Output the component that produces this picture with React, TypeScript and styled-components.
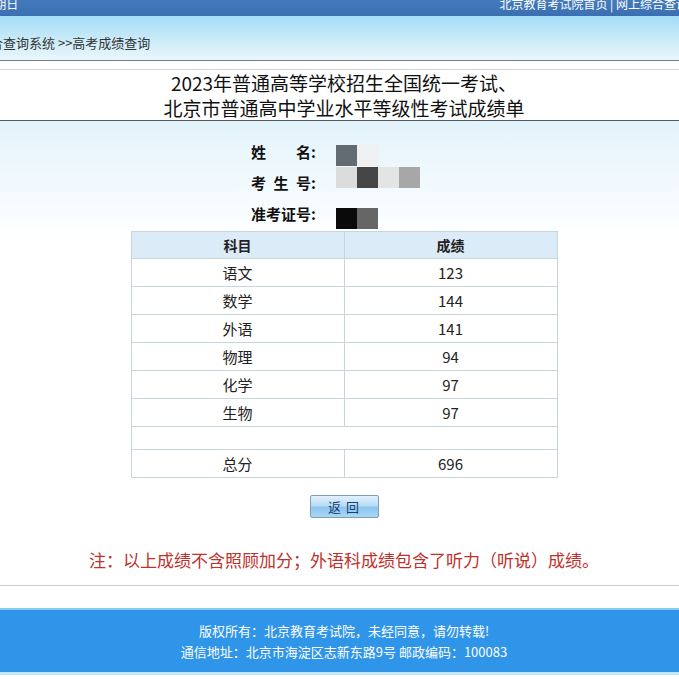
import React from 'react';
import styled, { createGlobalStyle } from 'styled-components';

const GlobalStyle = createGlobalStyle`
  html, body {
    margin: 0;
    padding: 0;
    background: #ffffff;
    overflow: hidden;
  }
  body {
    font-family: "Noto Sans CJK SC", "Noto Sans", sans-serif;
  }
`;

const scores = [
  { subject: '语文', score: '123' },
  { subject: '数学', score: '144' },
  { subject: '外语', score: '141' },
  { subject: '物理', score: '94' },
  { subject: '化学', score: '97' },
  { subject: '生物', score: '97' },
];

// blurred personal data, shown as mosaic tiles
const infoRows = [
  { label: '姓\u3000\u3000名:', pad: 9, blocks: ['#626a72', '#eef0f2'] },
  { label: '考\u2002生\u2002号:', pad: 0, blocks: ['#dcdcdd', '#454545', '#e3e4e4', '#a7a7a7'] },
  { label: '准考证号:', pad: 10, blocks: ['#0a0a0a', '#666666'] },
];

const App = () => {
  return (
    <>
      <GlobalStyle />
      <Page>
        <TopBar>
          <span>2023年6月25日 星期日</span>
          <TopLinks>北京教育考试院首页 | 网上综合查询系统</TopLinks>
        </TopBar>
        <Breadcrumb>当前位置：网上综合查询系统 &gt;&gt;高考成绩查询</Breadcrumb>
        <Spacer />
        <TitleBox>
          <div>2023年普通高等学校招生全国统一考试、</div>
          <div>北京市普通高中学业水平等级性考试成绩单</div>
        </TitleBox>
        <Content>
          <InfoGrid>
            {infoRows.map((row) => (
              <React.Fragment key={row.label}>
                <InfoLabel>{row.label}</InfoLabel>
                <InfoValue $pad={row.pad}>
                  {row.blocks.map((c, i) => (
                    <Mosaic key={i} $color={c} />
                  ))}
                </InfoValue>
              </React.Fragment>
            ))}
          </InfoGrid>
          <ScoreTable>
            <thead>
              <tr>
                <HeadCell>科目</HeadCell>
                <HeadCell>成绩</HeadCell>
              </tr>
            </thead>
            <tbody>
              {scores.map((s) => (
                <tr key={s.subject}>
                  <Cell>{s.subject}</Cell>
                  <Cell>{s.score}</Cell>
                </tr>
              ))}
              <tr>
                <BlankCell colSpan={2} />
              </tr>
              <tr>
                <Cell>总分</Cell>
                <Cell>696</Cell>
              </tr>
            </tbody>
          </ScoreTable>
          <ButtonRow>
            <BackButton>返 回</BackButton>
          </ButtonRow>
          <Note>注：以上成绩不含照顾加分；外语科成绩包含了听力（听说）成绩。</Note>
        </Content>
        <Footer>
          <div>版权所有：北京教育考试院，未经同意，请勿转载!</div>
          <div>通信地址：北京市海淀区志新东路9号 邮政编码：100083</div>
        </Footer>
      </Page>
    </>
  );
};

const Page = styled.div`
  width: 960px;
  margin-left: -136px;
  margin-top: -8px;
  display: flex;
  flex-direction: column;
`;

const TopBar = styled.div`
  height: 24px;
  display: flex;
  align-items: center;
  justify-content: space-between;
  padding-left: 33px;
  background: linear-gradient(#4a80c0, #3a70b2);
  color: #ffffff;
  font-size: 12px;
  line-height: 14px;
`;

const TopLinks = styled.span`
  padding-right: 112px;
`;

const Breadcrumb = styled.div`
  height: 45px;
  box-sizing: border-box;
  display: flex;
  align-items: flex-end;
  padding: 0 0 8px 22px;
  background: linear-gradient(#a3ddf6, #d6eff9 70%, #eaf7fc);
  border-bottom: 1px solid #6f8089;
  color: #333333;
  font-size: 13px;
  line-height: 18px;
`;

const Spacer = styled.div`
  height: 8px;
  background: #ffffff;
`;

const TitleBox = styled.div`
  border-top: 1px solid #d2d4d6;
  border-bottom: 1px solid #555a5e;
  background: #ffffff;
  text-align: center;
  font-size: 19px;
  line-height: 25px;
  color: #111111;
`;

const Content = styled.div`
  padding-top: 15px;
  padding-bottom: 13px;
  background: linear-gradient(#e2f3fb, #ffffff 115px);
  display: flex;
  flex-direction: column;
  border-bottom: 1px solid #c9cdd0;
`;

const InfoGrid = styled.div`
  display: grid;
  grid-template-columns: 452px 1fr;
  grid-auto-rows: 31px;
  column-gap: 20px;
`;

const InfoLabel = styled.div`
  display: flex;
  align-items: center;
  justify-content: flex-end;
  font-size: 15px;
  font-weight: 700;
  color: #111111;
  white-space: pre;
`;

const InfoValue = styled.div<{ $pad: number }>`
  display: flex;
  align-items: flex-start;
  padding-top: ${(p) => p.$pad}px;
`;

const Mosaic = styled.span<{ $color: string }>`
  width: 21px;
  height: 21px;
  background: ${(p) => p.$color};
`;

const ScoreTable = styled.table`
  width: 427px;
  margin: 2px auto 0;
  border-collapse: collapse;
  background: #ffffff;
  font-size: 15px;
  color: #222222;
`;

const HeadCell = styled.th`
  height: 26px;
  padding: 0;
  border: 1px solid #c6d6dc;
  background: #dcebf8;
  font-size: 14px;
  font-weight: 700;
  color: #222222;
  width: 50%;
`;

const Cell = styled.td`
  height: 27px;
  padding: 0;
  border: 1px solid #c6d6dc;
  text-align: center;
`;

const BlankCell = styled.td`
  height: 22px;
  padding: 0;
  border: 1px solid #c6d6dc;
`;

const ButtonRow = styled.div`
  display: flex;
  justify-content: center;
  margin-top: 17px;
`;

const BackButton = styled.button`
  width: 69px;
  height: 23px;
  padding: 0;
  border: 1px solid #7e9fb8;
  border-radius: 2px;
  background: linear-gradient(#e2f1fd, #b9dcf7 45%, #8ec7f1 55%, #a9d6f5);
  color: #1d3f6e;
  font-family: inherit;
  font-size: 13px;
  letter-spacing: 1px;
`;

const Note = styled.div`
  margin-top: 30px;
  text-align: center;
  color: #c0302a;
  font-size: 17px;
  line-height: 24px;
`;

const Footer = styled.div`
  margin-top: 22px;
  border-top: 2px solid #86cbf4;
  border-bottom: 3px solid #c2e5f8;
  background: #2f95e9;
  padding: 10px 0;
  text-align: center;
  color: #ffffff;
  font-size: 13px;
  line-height: 21px;
`;

export default App;
